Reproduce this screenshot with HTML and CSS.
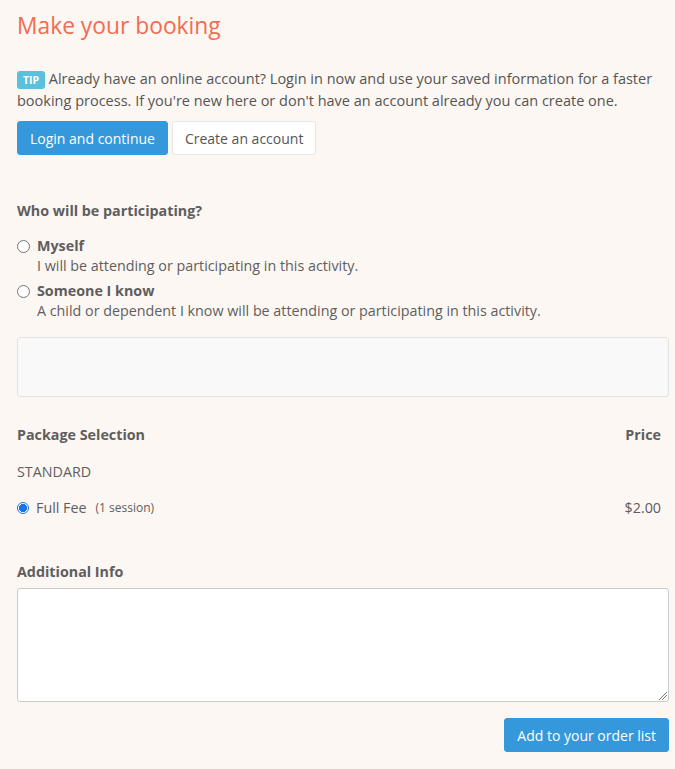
FILE: index.html
```html
<!DOCTYPE html>
<html>
<head>
<meta charset="utf-8">
<link rel="stylesheet" href="styles.css">
</head>
<body>
<div class="page">
  <h1 class="title">Make your booking</h1>
  <p class="tip"><span class="badge">TIP</span> Already have an online account? Login in now and use your saved information for a faster booking process. If you're new here or don't have an account already you can create one.</p>
  <div class="actions">
    <button class="btn btn-primary">Login and continue</button>
    <button class="btn btn-default">Create an account</button>
  </div>

  <div class="section-label">Who will be participating?</div>
  <div class="options">
    <label class="option">
      <span class="radio"></span>
      <span class="option-body">
        <span class="option-title">Myself</span>
        <span class="option-desc">I will be attending or participating in this activity.</span>
      </span>
    </label>
    <label class="option">
      <span class="radio"></span>
      <span class="option-body">
        <span class="option-title">Someone I know</span>
        <span class="option-desc">A child or dependent I know will be attending or participating in this activity.</span>
      </span>
    </label>
  </div>
  <div class="well"></div>

  <div class="pkg-head">
    <span>Package Selection</span>
    <span>Price</span>
  </div>
  <div class="pkg-group">STANDARD</div>
  <div class="pkg-row">
    <span class="pkg-name"><span class="radio checked"></span>Full Fee <small>(1 session)</small></span>
    <span class="pkg-price">$2.00</span>
  </div>

  <div class="section-label info-label">Additional Info</div>
  <div class="textarea"><span class="grip"></span></div>
  <div class="submit-row">
    <button class="btn btn-primary">Add to your order list</button>
  </div>
</div>
</body>
</html>
```
FILE: styles.css
```css
html, body {
  margin: 0;
  padding: 0;
  background: #fdf7f4;
}
body {
  font-family: "Open Sans", "Liberation Sans", sans-serif;
  color: #5e5e5e;
  font-size: 14.3px;
}
.page {
  width: 652px;
  padding: 0 6px 0 17px;
}
.title {
  margin: 0;
  padding-top: 9px;
  font-size: 22.8px;
  font-weight: 400;
  line-height: 34px;
  color: #f26c4f;
}
.tip {
  margin: 25px 0 0 0;
  font-size: 14.5px;
  line-height: 22px;
  color: #555;
}
.badge {
  display: inline-block;
  background: #5bc0de;
  color: #fff;
  font-size: 10.5px;
  font-weight: 700;
  line-height: 18px;
  width: 28px;
  text-align: center;
  border-radius: 3px;
  vertical-align: 0;
}
.actions {
  display: flex;
  gap: 4px;
  margin-top: 9px;
}
.btn {
  font-family: inherit;
  font-size: 14px;
  height: 34px;
  padding: 0 12px;
  border-radius: 3px;
  border: 1px solid transparent;
  cursor: pointer;
}
.btn-primary {
  background: #3498db;
  color: #fff;
  border-color: #3498db;
}
.btn-default {
  background: #fff;
  color: #555;
  border-color: #e6e6e6;
}
.section-label {
  font-weight: 700;
  line-height: 20px;
  color: #5e5e5e;
  margin-top: 46px;
}
.options {
  margin-top: 15px;
  display: flex;
  flex-direction: column;
  gap: 5px;
}
.option {
  display: flex;
  gap: 7px;
}
.radio {
  width: 11px;
  height: 11px;
  border: 1px solid #777;
  border-radius: 50%;
  background: #fff;
  margin-top: 4px;
  flex: none;
  box-sizing: content-box;
}
.radio.checked {
  border-color: #1a73e8;
  background: radial-gradient(circle, #1a73e8 0 3.8px, #fff 4.3px);
  width: 10px;
  height: 10px;
  border-width: 1.5px;
  margin: 0 7px 0 0;
}
.option-body {
  display: flex;
  flex-direction: column;
}
.option-title {
  font-weight: 700;
  line-height: 20px;
}
.option-desc {
  line-height: 20px;
}
.well {
  margin-top: 16px;
  height: 58px;
  border: 1px solid #e3e3e3;
  border-radius: 3px;
  background: #f9f9f9;
}
.pkg-head {
  display: flex;
  justify-content: space-between;
  font-weight: 700;
  line-height: 20px;
  margin-top: 28px;
  padding-right: 8px;
}
.pkg-group {
  margin-top: 17px;
  line-height: 20px;
}
.pkg-row {
  display: flex;
  justify-content: space-between;
  align-items: center;
  margin-top: 16px;
  line-height: 20px;
  padding-right: 8px;
}
.pkg-name {
  display: flex;
  align-items: center;
}
.pkg-name small {
  font-size: 12px;
  margin-left: 9px;
}
.info-label {
  margin-top: 44px;
}
.textarea {
  position: relative;
  margin-top: 6px;
  height: 112px;
  border: 1px solid #ccc;
  border-radius: 3px;
  background: #fff;
}
.grip {
  position: absolute;
  right: 1px;
  bottom: 1px;
  width: 8px;
  height: 8px;
  background: linear-gradient(135deg, transparent 0 45%, #777 45% 52%, transparent 52% 68%, #777 68% 75%, transparent 75%);
}
.submit-row {
  display: flex;
  justify-content: flex-end;
  margin-top: 16px;
}
```
